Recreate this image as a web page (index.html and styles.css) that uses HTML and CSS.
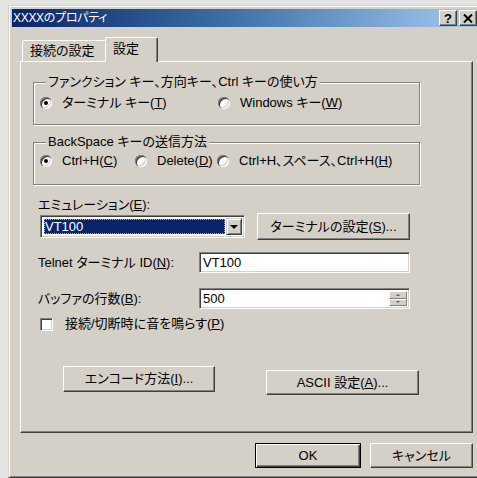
FILE: index.html
```html
<!DOCTYPE html>
<html lang="ja">
<head>
<meta charset="utf-8">
<title>XXXXのプロパティ</title>
<link rel="stylesheet" href="styles.css">
</head>
<body>
<div class="window">
  <div class="titlebar">
    <span class="title">XXXXのプロパティ</span>
    <div class="caption-buttons">
      <span class="cap-btn help">?</span>
      <span class="cap-btn close">
        <svg width="10" height="9" viewBox="0 0 10 9"><path d="M1 0.5 L9 8.5 M9 0.5 L1 8.5" stroke="#000" stroke-width="2"/></svg>
      </span>
    </div>
  </div>

  <div class="tabs">
    <div class="tab">接続の設定</div>
    <div class="tab active">設定</div>
  </div>

  <div class="panel">
    <fieldset class="group group-keys">
      <legend>ファンクション キー、方向キー、Ctrl キーの使い方</legend>
      <div class="radio-row">
        <label class="opt opt-terminal"><span class="radio on"></span><span>ターミナル キー(<u>T</u>)</span></label>
        <label class="opt"><span class="radio"></span><span>Windows キー(<u>W</u>)</span></label>
      </div>
    </fieldset>

    <fieldset class="group group-bs">
      <legend>BackSpace キーの送信方法</legend>
      <div class="radio-row">
        <label class="opt opt-ctrlh"><span class="radio on"></span><span>Ctrl+H(<u>C</u>)</span></label>
        <label class="opt opt-delete"><span class="radio"></span><span>Delete(<u>D</u>)</span></label>
        <label class="opt"><span class="radio"></span><span>Ctrl+H、スペース、Ctrl+H(<u>H</u>)</span></label>
      </div>
    </fieldset>

    <div class="form">
      <div class="label-line">エミュレーション(<u>E</u>):</div>
      <div class="emu-row">
        <div class="select">
          <div class="select-value"><span class="focus">VT100</span></div>
          <span class="drop-btn"><span class="arrow-down"></span></span>
        </div>
        <button class="btn btn-terminal">ターミナルの設定(<u>S</u>)...</button>
      </div>

      <div class="field-row telnet-row">
        <span class="field-label">Telnet ターミナル ID(<u>N</u>):</span>
        <div class="textbox">VT100</div>
      </div>

      <div class="field-row buffer-row">
        <span class="field-label">バッファの行数(<u>B</u>):</span>
        <div class="textbox spin">
          <span class="spin-value">500</span>
          <span class="spin-btns">
            <span class="spin-btn"><span class="arrow-up-s"></span></span>
            <span class="spin-btn"><span class="arrow-down-s"></span></span>
          </span>
        </div>
      </div>

      <label class="check-row"><span class="checkbox"></span><span>接続/切断時に音を鳴らす(<u>P</u>)</span></label>

      <div class="action-row">
        <button class="btn btn-encode">エンコード方法(<u>I</u>)...</button>
        <button class="btn btn-ascii">ASCII 設定(<u>A</u>)...</button>
      </div>
    </div>
  </div>

  <div class="footer">
    <button class="btn btn-ok">OK</button>
    <button class="btn btn-cancel">キャンセル</button>
  </div>
</div>
</body>
</html>
```

FILE: styles.css
```css
* { box-sizing: border-box; }

html, body {
  margin: 0;
  height: 100%;
  overflow: hidden;
}

body {
  background: #e3e3e1;
  font-family: "Liberation Sans", "Noto Sans CJK JP", sans-serif;
  font-size: 13px;
  line-height: 16px;
  color: #000;
  font-feature-settings: "palt";
}

u { text-decoration: underline; text-underline-offset: 1px; }

/* dialog frame */
.window {
  width: 475px;
  height: 473px;
  margin: 5px 0 0 8px;
  padding: 3px;
  background: #d4d0c8;
  border: 1px solid;
  border-color: #d4d0c8 #404040 #404040 #d4d0c8;
  box-shadow: inset 1px 1px 0 #fff, inset -1px -1px 0 #808080;
}

/* caption */
.titlebar {
  height: 18px;
  display: flex;
  align-items: center;
  padding: 0 2px 0 1px;
  background: linear-gradient(to right, #0a246a 0%, #3a6ea5 45%, #a6caf0 100%);
}
.title {
  color: #fff;
  font-size: 12px;
  letter-spacing: -0.3px;
}
.caption-buttons {
  margin-left: auto;
  display: flex;
  gap: 2px;
}
.cap-btn {
  width: 18px;
  height: 16px;
  display: flex;
  align-items: center;
  justify-content: center;
  background: #d4d0c8;
  border: 1px solid;
  border-color: #fff #404040 #404040 #fff;
  box-shadow: inset -1px -1px 0 #808080;
  font-weight: bold;
  font-size: 13px;
  line-height: 1;
}

/* tab strip */
.tabs {
  margin-top: 10px;
  height: 24px;
  padding-left: 10px;
  display: flex;
  align-items: flex-end;
  position: relative;
  z-index: 1;
}
.tab {
  height: 21px;
  padding: 2px 8px 0 7px;
  border: 1px solid;
  border-bottom: none;
  border-color: #fff #404040 transparent #fff;
  border-radius: 2px 2px 0 0;
  box-shadow: inset -1px 0 0 #808080;
  background: #d4d0c8;
  width: 85px;
}
.tab.active {
  width: 53px;
  height: 25px;
  margin-left: -2px;
  margin-bottom: -1px;
  padding: 3px 7px 0 7px;
}

/* property page */
.panel {
  margin-left: 8px;
  width: 453px;
  height: 372px;
  padding: 12px 0 0 12px;
  border: 1px solid;
  border-color: #fff #404040 #404040 #fff;
  box-shadow: inset -1px -1px 0 #808080;
}

.group {
  width: 387px;
  margin: 0;
  padding: 5px 0 13px 6px;
  border: 1px solid #808080;
  box-shadow: inset 1px 1px 0 #fff, 1px 1px 0 #fff;
}
.group legend {
  margin-left: 6px;
  padding: 0 2px;
  line-height: 16px;
  background: #d4d0c8;
}
.group-bs {
  margin-top: 9px;
  padding: 3px 0 15px 6px;
}

.radio-row {
  display: flex;
  align-items: center;
  height: 16px;
}
.opt {
  display: flex;
  align-items: center;
  gap: 10px;
  white-space: nowrap;
}
.opt-terminal { width: 178px; }
.opt-ctrlh { width: 95px; }
.opt-delete { width: 82px; }

.radio {
  width: 12px;
  height: 12px;
  border-radius: 50%;
  background: #fff;
  position: relative;
  box-shadow: inset 1px 1px 0 #808080, inset 2px 2px 0 #404040, inset -1px -1px 0 #fff, inset -2px -2px 0 #d4d0c8;
  flex: none;
}
.radio.on::after {
  content: "";
  position: absolute;
  left: 4px;
  top: 4px;
  width: 4px;
  height: 4px;
  border-radius: 50%;
  background: #000;
}

/* lower controls */
.form {
  margin-left: 5px;
}
.label-line {
  margin-top: 12px;
}
.emu-row {
  margin-top: 0;
  display: flex;
  align-items: center;
  gap: 12px;
  margin-left: 2px;
}

.select {
  width: 205px;
  height: 23px;
  display: flex;
  background: #fff;
  border: 1px solid;
  border-color: #808080 #fff #fff #808080;
  box-shadow: inset 1px 1px 0 #404040, inset -1px -1px 0 #d4d0c8;
  padding: 2px;
}
.select-value {
  flex: 1;
  display: flex;
  padding: 1px 1px;
}
.focus {
  flex: 1;
  background: #0a246a;
  color: #fff;
  outline: 1px dotted #c8b860;
  outline-offset: -1px;
  padding-left: 1px;
  line-height: 15px;
}
.drop-btn {
  width: 16px;
  height: 17px;
  display: flex;
  align-items: center;
  justify-content: center;
  background: #d4d0c8;
  border: 1px solid;
  border-color: #d4d0c8 #404040 #404040 #d4d0c8;
  box-shadow: inset 1px 1px 0 #fff, inset -1px -1px 0 #808080;
}
.arrow-down {
  width: 0;
  height: 0;
  border-left: 4px solid transparent;
  border-right: 4px solid transparent;
  border-top: 4px solid #000;
}

.btn {
  font: inherit;
  color: #000;
  background: #d4d0c8;
  border: 1px solid;
  border-color: #fff #404040 #404040 #fff;
  box-shadow: inset -1px -1px 0 #808080;
  padding: 0;
  margin: 0;
  height: 26px;
  white-space: nowrap;
}
.btn-terminal {
  width: 153px;
  height: 27px;
}

.field-row {
  display: flex;
  align-items: center;
}
.field-label {
  width: 161px;
  white-space: nowrap;
}
.telnet-row { margin-top: 12px; }
.buffer-row { margin-top: 15px; }

.textbox {
  width: 211px;
  height: 21px;
  background: #fff;
  border: 1px solid;
  border-color: #808080 #fff #fff #808080;
  box-shadow: inset 1px 1px 0 #404040, inset -1px -1px 0 #d4d0c8;
  padding: 2px 3px;
  line-height: 16px;
}
.textbox.spin {
  display: flex;
  padding: 2px 2px 2px 3px;
}
.spin-value { flex: 1; }
.spin-btns {
  display: flex;
  flex-direction: column;
  width: 18px;
}
.spin-btn {
  flex: 1;
  display: flex;
  align-items: center;
  justify-content: center;
  background: #d4d0c8;
  border: 1px solid;
  border-color: #fff #808080 #808080 #fff;
}
.arrow-up-s, .arrow-down-s {
  width: 0;
  height: 0;
  border-left: 2px solid transparent;
  border-right: 2px solid transparent;
}
.arrow-up-s { border-bottom: 2px solid #606060; }
.arrow-down-s { border-top: 2px solid #606060; }

.check-row {
  margin-top: 7px;
  margin-left: 2px;
  display: flex;
  align-items: center;
  gap: 12px;
}
.checkbox {
  width: 13px;
  height: 13px;
  background: #fff;
  border: 1px solid;
  border-color: #808080 #fff #fff #808080;
  box-shadow: inset 1px 1px 0 #404040, inset -1px -1px 0 #d4d0c8;
}

.action-row {
  margin-top: 34px;
  margin-left: 25px;
  display: flex;
  align-items: flex-start;
  gap: 51px;
}
.btn-encode { width: 152px; }
.btn-ascii { width: 153px; margin-top: 4px; height: 25px; }

/* OK / Cancel */
.footer {
  width: 461px;
  margin-top: 10px;
  display: flex;
  justify-content: flex-end;
  gap: 9px;
}
.btn-ok {
  width: 106px;
  height: 25px;
  border: 1px solid #000;
  box-shadow: inset 1px 1px 0 #fff, inset -1px -1px 0 #404040, inset -2px -2px 0 #808080;
}
.btn-cancel {
  width: 103px;
  height: 25px;
}
```
